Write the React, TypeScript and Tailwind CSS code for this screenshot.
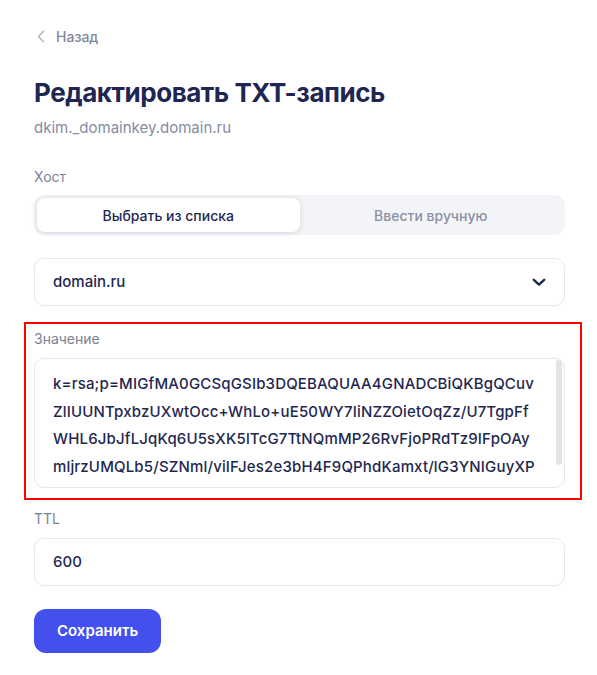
import { useState } from "react";

const valueLines = [
  "k=rsa;p=MIGfMA0GCSqGSIb3DQEBAQUAA4GNADCBiQKBgQCuv",
  "ZlIUUNTpxbzUXwtOcc+WhLo+uE50WY7IiNZZOietOqZz/U7TgpFf",
  "WHL6JbJfLJqKq6U5sXK5lTcG7TtNQmMP26RvFjoPRdTz9IFpOAy",
  "mljrzUMQLb5/SZNml/viIFJes2e3bH4F9QPhdKamxt/lG3YNIGuyXP",
  "XGZvRxU9BFXwIDAQAB",
];

export default function App() {
  const [mode, setMode] = useState<"list" | "manual">("list");

  return (
    <div
      className="min-h-screen bg-white pl-[34px] pr-[32px] pt-[26px] text-[#1f2850]"
      style={{ fontFamily: "Inter, 'Noto Sans', sans-serif" }}
    >
      {/* back link */}
      <a href="#" className="flex h-5 items-center text-[14px] font-medium text-[#7f869d]">
        <svg width="8" height="13" viewBox="0 0 8 13" className="ml-[3px] mr-[11px]">
          <path d="M6.5 1.2 1.6 6.5l4.9 5.3" fill="none" stroke="#b4b8c6" strokeWidth="1.6" strokeLinecap="round" strokeLinejoin="round" />
        </svg>
        Назад
      </a>

      <h1 className="mt-[31px] text-[26px] font-bold leading-[32px] tracking-[-0.45px] text-[#1e2651]">
        Редактировать TXT-запись
      </h1>
      <div className="mt-[9px] text-[15px] leading-5 text-[#858ba1]">dkim._domainkey.domain.ru</div>

      {/* host */}
      <div className="mt-[29px] text-[14px] leading-5 text-[#7b8197]">Хост</div>
      <div className="mt-[8px] grid h-10 grid-cols-2 rounded-[10px] bg-[#f3f4f7] p-[3px]">
        <button
          onClick={() => setMode("list")}
          className={
            mode === "list"
              ? "rounded-[8px] bg-white text-[14px] font-medium text-[#1f2850] shadow-[0_1px_6px_rgba(30,40,80,0.14)]"
              : "rounded-[8px] text-[14px] font-medium text-[#8a90a5]"
          }
        >
          Выбрать из списка
        </button>
        <button
          onClick={() => setMode("manual")}
          className={
            mode === "manual"
              ? "rounded-[8px] bg-white text-[14px] font-medium text-[#1f2850] shadow-[0_1px_6px_rgba(30,40,80,0.14)]"
              : "rounded-[8px] text-[14px] font-medium text-[#8a90a5]"
          }
        >
          Ввести вручную
        </button>
      </div>

      <div className="mt-[23px] flex h-12 items-center justify-between rounded-[10px] border border-[#e4e6ec] px-[18px]">
        <span className="text-[15px] font-medium text-[#1f2850]">domain.ru</span>
        <svg width="14" height="9" viewBox="0 0 14 9">
          <path d="M1.8 1.8 7 6.6l5.2-4.8" fill="none" stroke="#1f2850" strokeWidth="2.4" strokeLinecap="round" strokeLinejoin="round" />
        </svg>
      </div>

      {/* value, highlighted */}
      <div className="-ml-[10px] -mr-[17px] mt-[16px] border-2 border-[#ff0000] pb-[10px] pl-[8px] pr-[15px] pt-[5px]">
        <div className="text-[14px] leading-5 text-[#7b8197]">Значение</div>
        <div className="relative mt-[9px] h-[130px] overflow-hidden rounded-[10px] border border-[#e4e6ec] px-[18px] pt-[11px]">
          {valueLines.map((line) => (
            <div key={line} className="whitespace-nowrap text-[15px] font-medium leading-[27.6px] tracking-[0.16px] text-[#1f2850]">
              {line}
            </div>
          ))}
          <div className="absolute right-[2px] top-[1px] h-[105px] w-[6px] rounded-full bg-[#e3e4ea]" />
        </div>
      </div>

      {/* ttl */}
      <div className="mt-[9px] text-[14px] leading-5 text-[#7b8197]">TTL</div>
      <div className="mt-[9px] flex h-12 items-center rounded-[10px] border border-[#e4e6ec] px-[18px]">
        <span className="text-[15px] font-medium text-[#1f2850]">600</span>
      </div>

      <button className="mt-[23px] h-11 rounded-[12px] bg-[#4450ee] px-[23px] text-[15px] font-semibold text-white">
        Сохранить
      </button>
    </div>
  );
}
